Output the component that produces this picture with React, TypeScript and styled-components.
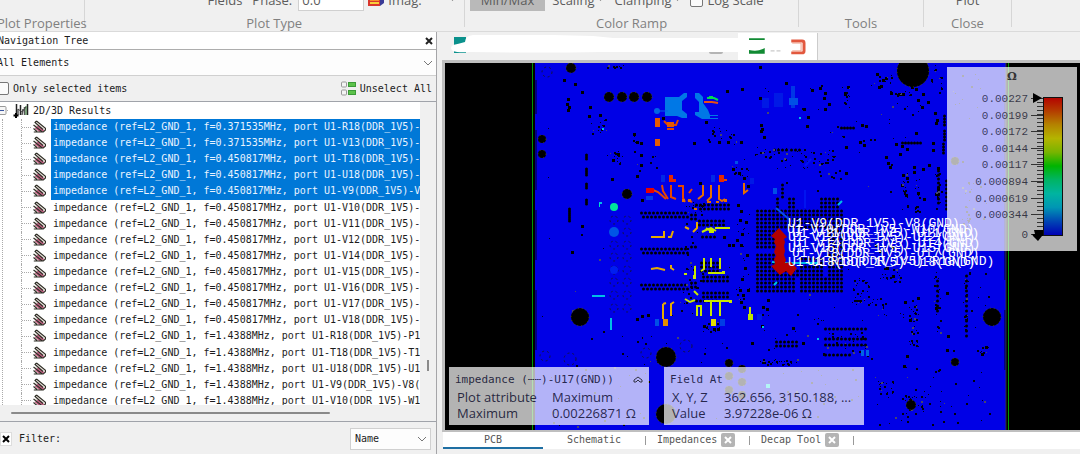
import React from 'react';
import styled, { createGlobalStyle } from 'styled-components';

const mono = '"DejaVu Sans Mono", "Liberation Mono", monospace';
const sans = '"Open Sans", "Noto Sans", sans-serif';

const GlobalStyle = createGlobalStyle`
  * { box-sizing: border-box; }
  body { margin: 0; background: #f0f0f0; overflow: hidden; }
  button, input, select { font: inherit; color: inherit; margin: 0; }
`;

const Shell = styled.div`
  display: flex;
  flex-direction: column;
  height: 100vh;
  overflow: hidden;
  background: #f0f0f0;
  color: #1c1c1c;
  font: 10px/16px ${mono};
`;

/* ---------- Ribbon ---------- */

const Ribbon = styled.header`
  display: flex;
  flex: none;
  height: 32px;
  border-bottom: 1px solid #dadada;
  font: 13px/16px ${sans};
  color: #5c5c5c;
`;

const Group = styled.section<{ $grow: number; $last?: boolean }>`
  display: flex;
  flex: ${(p) => p.$grow} 1 0;
  flex-direction: column;
  align-items: center;
  min-width: 0;
  height: 27px;
  border-right: ${(p) => (p.$last ? '0' : '1px solid #d6d6d6')};
  white-space: nowrap;
`;

const Controls = styled.div<{ $pad?: number; $center?: boolean }>`
  display: flex;
  flex: none;
  align-items: center;
  align-self: stretch;
  justify-content: ${(p) => (p.$center ? 'center' : 'flex-start')};
  height: 22px;
  margin-top: -11px;
  padding-left: ${(p) => p.$pad ?? 0}px;
`;

const GroupTitle = styled.div`
  flex: none;
  margin-top: 4px;
  color: #808080;
`;

const RibbonButton = styled.button<{ $active?: boolean; $gap?: number }>`
  display: flex;
  align-items: center;
  gap: 4px;
  height: 22px;
  margin-left: ${(p) => p.$gap ?? 0}px;
  padding: ${(p) => (p.$active ? '0 11px' : '0')};
  border: 0;
  background: ${(p) => (p.$active ? '#b9b9b9' : 'transparent')};
`;

const PhaseLabel = styled.label`
  display: flex;
  align-items: center;
  gap: 6px;
  margin-left: 10px;
`;

const PhaseInput = styled.input`
  width: 66px;
  height: 22px;
  padding: 0 3px;
  border: 1px solid #d0d0d0;
  background: #fff;
`;

const ScaleLabel = styled.label`
  display: flex;
  align-items: center;
  gap: 4px;
  margin-left: 10px;
`;

const Box = styled.input`
  appearance: none;
  width: 13px;
  height: 13px;
  border: 1px solid #777;
  border-radius: 2px;
  background: #fbfbfb;
`;

/* ---------- Body ---------- */

const Body = styled.main`
  display: flex;
  flex: 1;
  min-height: 0;
`;

const Sidebar = styled.aside`
  display: flex;
  flex: 0 0 441px;
  flex-direction: column;
  margin-left: -4px;
  border-right: 1px solid #a5a5a8;
`;

const PanelTitle = styled.div`
  display: flex;
  align-items: center;
  justify-content: space-between;
  height: 18px;
  padding: 0 0 0 2px;
  border-bottom: 1px solid #adadad;
  background: #fff;
`;

const IconButton = styled.button`
  display: grid;
  place-items: center;
  width: 14px;
  height: 14px;
  padding: 0;
  border: 0;
  background: transparent;
`;

const SelectWrap = styled.div<{ $small?: boolean }>`
  display: grid;
  align-items: center;
  width: ${(p) => (p.$small ? '81px' : 'auto')};
  height: ${(p) => (p.$small ? '22px' : '26px')};
  border: solid #d0d0d0;
  border-width: ${(p) => (p.$small ? '1px' : '0 0 1px')};
  background: #fdfdfd;

  > * { grid-area: 1 / 1; }
  > svg { justify-self: end; margin-right: 3px; pointer-events: none; }
`;

const Select = styled.select<{ $pad: number }>`
  appearance: none;
  width: 100%;
  height: 100%;
  padding: 0 16px 0 ${(p) => p.$pad}px;
  border: 0;
  background: transparent;
`;

const Options = styled.div`
  display: flex;
  align-items: center;
  justify-content: space-between;
  height: 25px;
  padding-right: 4px;
`;

const CheckLabel = styled.label`
  display: flex;
  align-items: center;
  gap: 4px;
`;

const TextButton = styled.button`
  display: flex;
  align-items: center;
  gap: 4px;
  padding: 0;
  border: 0;
  background: transparent;
`;

const TreeFrame = styled.div`
  display: grid;
  flex: 1;
  grid-template: minmax(0, 1fr) 16px / minmax(0, 1fr) 16px;
  min-height: 0;
  border: solid #a0a3aa;
  border-width: 1px 0;
`;

const Tree = styled.div`
  overflow: hidden;
  padding-left: 4px;
  background: #fff;
`;

const TreeRoot = styled.div`
  display: flex;
  align-items: center;
  gap: 4px;
  height: 17px;
`;

const TreeRows = styled.ul`
  display: grid;
  grid-auto-rows: 1fr;
  height: 290px;
  margin: 0 0 0 2px;
  padding: 0;
  border-left: 1px dotted #aaa;
  list-style: none;
`;

const TreeRow = styled.li`
  display: flex;
  align-items: center;
  padding-left: 18px;
  white-space: pre;
`;

const Branch = styled.span`
  align-self: stretch;
  display: flex;
  align-items: center;
  width: 12px;
  border-left: 1px dotted #aaa;

  &::after {
    content: '';
    flex: 1;
    border-top: 1px dotted #aaa;
    margin-right: 2px;
  }
`;

const RowText = styled.span<{ $selected: boolean }>`
  display: flex;
  flex: 1;
  align-items: center;
  align-self: stretch;
  min-width: 0;
  margin-left: 5px;
  padding-left: 2px;
  overflow: hidden;
  background: ${(p) => (p.$selected ? '#0078d7' : 'transparent')};
  color: ${(p) => (p.$selected ? '#e8f3ff' : '#1c1c1c')};
`;

const VScroll = styled.div`
  display: flex;
  justify-content: center;
  align-items: flex-end;
  padding-bottom: 34px;
  &::after { content: ''; width: 2px; height: 11px; background: #8a8a8a; }
`;

const HScroll = styled.div`
  display: flex;
  align-items: center;
  padding-left: 15px;
  &::after { content: ''; width: 319px; height: 2px; border-radius: 1px; background: #8a8a8a; }
`;

const FilterRow = styled.div`
  display: flex;
  align-items: center;
  gap: 7px;
  height: 32px;
  padding: 2px 5px 0 4px;

  > :last-child { margin-left: auto; }
`;

const ClearButton = styled(IconButton)`
  width: 12px;
  border: 1px solid #ddd;
  background: #fff;
`;

/* ---------- Work area ---------- */

const Work = styled.section`
  display: flex;
  flex: 1;
  flex-direction: column;
  min-width: 0;
  margin-left: 5px;
`;

const DocTabs = styled.div`
  display: flex;
  height: 28px;
  padding: 1px 0 0 9px;
`;

const DocTab = styled.button<{ $active?: boolean }>`
  display: flex;
  align-items: center;
  width: ${(p) => (p.$active ? '80px' : '287px')};
  height: 27px;
  padding: ${(p) => (p.$active ? '0 11px 2px' : '0 0 2px')};
  border: 0;
  border-right: ${(p) => (p.$active ? '1px solid #ccc' : '0')};
  background: ${(p) => (p.$active ? '#fff' : 'transparent')};
`;

const Viewport = styled.div`
  position: relative;
  flex: 1;
  min-height: 0;
  border: solid #bfbfbf;
  border-width: 3px 0 2px 3px;
  background: #000;

  > svg { display: block; width: 100%; height: 100%; }
`;

const Legend = styled.div`
  position: absolute;
  top: 4px;
  right: 3px;
  width: 130px;
  height: 184px;
  background: rgba(255, 255, 255, 0.7);
`;

const Cards = styled.div`
  position: absolute;
  bottom: 5px;
  left: 4px;
  display: flex;
  gap: 15px;
`;

const Card = styled.section`
  width: 200px;
  height: 58px;
  padding: 5px 6px 0;
  background: rgba(255, 255, 255, 0.7);
  color: rgba(0, 0, 30, 0.8);
  font: 13px/16px ${sans};
`;

const CardTitle = styled.h2`
  display: flex;
  align-items: center;
  justify-content: space-between;
  height: 16px;
  margin: 0 0 1px;
  font: 11px/16px ${mono};
`;

const Fields = styled.dl<{ $col: number }>`
  display: grid;
  grid-template-columns: ${(p) => p.$col}px 1fr;
  margin: 0;
  padding-left: 2px;
  white-space: nowrap;

  dd { margin: 0; }
`;

const ViewTabs = styled.nav`
  display: flex;
  align-items: stretch;
  height: 17px;
  margin: 0 0 5px 1px;
  background: #fff;
  color: #555;
`;

const ViewTab = styled.button<{ $active?: boolean; $width: number }>`
  width: ${(p) => p.$width}px;
  padding: 0;
  border: 0;
  border-bottom: 2px solid ${(p) => (p.$active ? '#1f6fa3' : 'transparent')};
  background: transparent;
  white-space: nowrap;
`;

const CloseTab = styled.button`
  display: grid;
  place-items: center;
  align-self: center;
  width: 14px;
  height: 14px;
  margin: 0 3px 2px 4px;
  padding: 0;
  border: 0;
  border-radius: 2px;
  background: #b4b4b4;
`;

const Divider = styled.span`
  align-self: center;
  width: 1px;
  height: 9px;
  margin: 0 11px;
  background: #999;

  button:nth-child(2) + & { margin-left: 0; }
`;

/* ---------- Icons ---------- */

const Chevron = () => (
  <svg width="10" height="6" viewBox="0 0 10 6" fill="none" stroke="#777">
    <path d="M1 1l4 4 4-4" />
  </svg>
);

const Cross = ({ size = 8, color = '#222' }: { size?: number; color?: string }) => (
  <svg width={size} height={size} viewBox="0 0 8 8" stroke={color} strokeWidth="2">
    <path d="M1 1l6 6M7 1L1 7" />
  </svg>
);

const Caret = () => (
  <svg width="5" height="4" viewBox="0 0 5 4"><path d="M0 0h5L2.500 3z" fill="#777" /></svg>
);

const FieldIcon = () => (
  <svg width="13" height="14" viewBox="0 0 13 14">
    <path d="M2 2l2-1 8.500 7v2L10.500 12H1l3.500-1.500L.5 8l3-.5L.5 5 3 4.500z" fill="#e9e2dc" />
    <path d="M4.500 6l6 5M2.500 7.500l5 4" stroke="#c4587f" strokeWidth="2" />
    <path d="M3.500 1l9 7.200V10l-2.200 2H.8M3.500 1L2 2.500l8 7M.5 5l9 7M.5 8.500l3.500 3" fill="none" stroke="#2c2c24" strokeWidth="1.100" />
  </svg>
);

const ResultsIcon = () => (
  <svg width="16" height="16" viewBox="0 0 16 16">
    <path d="M3.500 1v9M7.500 2v10M14.500 1v11" stroke="#222" strokeWidth="1.500" />
    <path d="M5 12V6M9 12l1-6M11.500 12V4" stroke="#555" strokeWidth="1.500" />
    <path d="M13 12V3" stroke="#5b8f5b" strokeWidth="1.500" />
    <path d="M5 6l4 3 4-5" stroke="#444" fill="none" />
    <path d="M.5 12.500h5M3 10v5" stroke="#000" strokeWidth="2" />
  </svg>
);

const Expander = () => (
  <svg width="9" height="12" viewBox="0 0 9 12">
    <rect x="-3" y="1.500" width="9" height="8" rx="1" fill="#f6f6f6" stroke="#999" />
    <path d="M0 5.500h4" stroke="#3a56a0" />
    <path d="M7 5.500h2" stroke="#aaa" strokeDasharray="1 1" />
  </svg>
);

const UnselectIcon = () => (
  <svg width="15" height="15" viewBox="0 0 15 15">
    <rect x=".5" y="1" width="5" height="5" rx="1" fill="#f4f4f4" stroke="#999" />
    <rect x=".5" y="9" width="5" height="5" rx="1" fill="#f4f4f4" stroke="#999" />
    <rect x="7.500" y="1.500" width="7" height="4" fill="#5cc24a" stroke="#3c9a38" />
    <rect x="7.500" y="9.500" width="7" height="4" fill="#5cc24a" stroke="#3c9a38" />
  </svg>
);

const PlotIcon = () => (
  <svg width="16" height="14" viewBox="0 0 16 14">
    <path d="M4 0h12v10l-4 3H4z" fill="#3a3a96" />
    <path d="M0 4h12v9H0z" fill="#d9362c" />
    <path d="M2 6h9v2H2z" fill="#f58d2c" />
    <path d="M2 9h9v2H2z" fill="#f7cf3a" />
  </svg>
);

/* ---------- Board drawing ---------- */

type Pt = [number, number];

const pairs = (s: string): Pt[] => s.split(' ').map((v) => v.split(',').map(Number) as Pt);

const dots = pairs(
  '564,80 575,84 582,92 568,99 567,104 569,107 568,110 590,107 589,116 600,115 634,134 637,142 641,143 641,155 641,165 637,176 618,154 613,160 612,179 582,226 572,252 642,200 760,67 760,98 727,91 742,89 786,83 706,122 663,118 694,143 719,142 728,142 741,142 761,125 762,129 761,131 764,137 812,90 820,88 825,93 824,98 829,104 825,109 804,109 808,117 807,126 846,173 892,247 886,78 877,74 881,86 883,80 879,87 912,87 916,89 918,100 922,107 928,102 923,94 891,93 899,94 903,94 937,120 935,113 936,123 862,125 866,126 860,142 864,145 846,147 916,133 896,144 902,146 907,149 900,154 933,143 933,150 886,157 888,163 890,167 903,175 914,167 914,172 923,169 929,165 938,168 907,178 902,185 906,195 918,193 924,199 938,188 937,194 848,87 845,94 845,93 748,186 744,178 700,183 738,205 741,211 740,220 746,222 742,234 737,240 741,245 747,255 745,268 742,279 740,290 743,295 748,290 741,302 744,307 733,169 739,173 763,307 768,300 767,309 762,326 793,328 637,319 642,316 648,315 704,326 714,329 718,329 724,237 729,245 733,245 876,245 880,251 887,268 893,276 910,320 905,302 918,298 936,308 947,293 948,336 947,350 982,354 986,347 907,356 904,366 752,343 803,343'
);

const discs: [number, number, number][] = [
  [571, 68, 5], [609, 97, 5], [622, 97, 5], [634, 97, 5], [647, 97, 5], [542, 139, 4], [542, 154, 4],
  [627, 194, 5], [913, 71, 16], [580, 317, 9], [666, 357, 10], [666, 414, 10], [992, 317, 9], [955, 362, 4],
  [729, 363, 4], [742, 369, 4], [729, 376, 4], [742, 382, 4], [729, 390, 4], [742, 395, 4], [955, 161, 4], [911, 405, 5],
];

// x, y, width, height and pitch of each regular via pattern
const grids: number[][] = [
  [640, 212, 46, 1, 4], [642, 216, 46, 1, 4], [640, 248, 46, 1, 4], [642, 252, 46, 1, 4],
  [640, 284, 46, 1, 4], [642, 288, 46, 1, 4], [695, 204, 34, 1, 4], [699, 208, 28, 1, 4],
  [690, 214, 6, 5, 4], [698, 220, 24, 5, 4], [701, 236, 14, 1, 4], [690, 246, 6, 1, 4],
  [700, 262, 16, 9, 4], [702, 276, 26, 5, 4], [690, 282, 6, 5, 4], [702, 292, 26, 5, 4], [695, 300, 22, 1, 4],
  [756, 210, 86, 4, 4], [756, 218, 20, 28, 4], [756, 254, 20, 20, 4], [756, 278, 36, 12, 4],
  [800, 278, 40, 12, 4], [828, 258, 12, 16, 4], [820, 198, 16, 8, 4], [776, 198, 1, 8, 4], [788, 198, 5, 8, 4],
  [780, 218, 60, 8, 4], [828, 230, 12, 24, 4], [780, 270, 40, 4, 4], [800, 258, 20, 8, 4],
  [824, 328, 42, 1, 4], [824, 338, 42, 1, 4], [824, 344, 42, 1, 4], [824, 354, 26, 1, 4],
  [775, 341, 22, 4, 4], [901, 142, 20, 1, 3], [840, 127, 12, 1, 3],
  [943, 115, 1, 10, 3], [943, 130, 1, 10, 3], [942, 143, 1, 10, 3], [937, 170, 1, 34, 4], [945, 180, 1, 28, 4],
  [585, 154, 1, 5, 2], [585, 168, 1, 6, 2], [585, 183, 1, 5, 2], [585, 199, 1, 5, 2], [568, 208, 1, 13, 2],
  [781, 184, 1, 14, 4], [936, 280, 1, 34, 5], [965, 275, 1, 60, 5], [773, 149, 12, 1, 4], [790, 149, 9, 1, 4],
];

// x, y, width, height and count of each region with irregular small marks
const clusters: number[][] = [
  [590, 118, 18, 16, 14], [606, 150, 16, 14, 12], [606, 65, 24, 2, 10], [705, 126, 40, 18, 20],
  [630, 130, 28, 40, 10], [754, 146, 20, 12, 16], [776, 148, 32, 20, 22], [800, 148, 36, 16, 22],
  [870, 74, 22, 12, 14], [888, 90, 26, 5, 12], [930, 64, 12, 30, 14], [840, 85, 10, 30, 12],
  [824, 125, 20, 12, 5], [816, 170, 26, 8, 8], [902, 170, 6, 40, 18], [914, 178, 5, 34, 16], [935, 170, 6, 42, 16],
  [852, 278, 18, 26, 34], [872, 298, 14, 18, 16], [880, 268, 20, 14, 18], [908, 304, 10, 42, 34],
  [900, 300, 18, 18, 8], [934, 270, 6, 70, 18], [963, 270, 6, 60, 20], [976, 344, 12, 12, 8],
  [730, 164, 26, 14, 10], [736, 210, 14, 94, 20], [684, 200, 20, 14, 14], [684, 222, 18, 60, 18],
  [680, 284, 18, 30, 14], [696, 322, 24, 10, 12], [822, 328, 46, 28, 30], [760, 358, 40, 6, 24],
  [765, 64, 70, 50, 8], [850, 104, 80, 60, 16], [540, 230, 70, 160, 8], [640, 335, 150, 28, 14],
  [610, 330, 60, 35, 8], [750, 310, 60, 30, 8], [850, 366, 140, 60, 50], [900, 395, 24, 22, 24],
  [870, 380, 24, 14, 16], [780, 370, 60, 50, 24], [970, 180, 20, 150, 12], [550, 366, 100, 60, 24],
  [950, 70, 30, 50, 12], [962, 180, 8, 54, 22], [540, 64, 460, 360, 30], [805, 294, 40, 30, 8],
];

const scatter = (): [number, number, number][] => {
  let seed = 29;
  const next = () => {
    seed = (seed * 1103515245 + 12345) % 2147483648;
    return seed / 2147483648;
  };
  return clusters.flatMap(([x, y, w, h, n]) =>
    Array.from({ length: n }, (): [number, number, number] => [
      Math.round(x + next() * w), Math.round(y + next() * h), next() > 0.55 ? 2 : 1,
    ])
  );
};

const gridPath = grids
  .map(([x, y, w, h, s]) => {
    let d = '';
    for (let j = 0; j <= h; j += s) for (let i = 0; i <= w; i += s) d += `M${x + i} ${y + j + 1}a1.500 1.500 0 0 1 3 0a1.500 1.500 0 0 1-3 0z`;
    return d;
  })
  .join('');

const traces: [string, string][] = [
  ['#e64600', 'M653 190l5 2 8 7M662 185l1 6 5 8M671 185v12l5 2M678 186h6M683 186v12l2 4M692 189l-3 4M688 200l4 2M664 121l4 4h8l2-5M667 129h7'],
  ['#e66e00', 'M703 185v10l-5 4M711 185v12l-4 4M719 185v14l3 2 3-2M744 183v10l4-3M707 202h4M694 209h3M716 202h3'],
  ['#e6aa00', 'M651 237h13v-6M673 231l-2 6h-3M651 269l6-1 8 2M671 265v3l3 2M663 304v15M663 304l3-1M671 316v-12l3-2M685 227l4 2M697 222v6l-4 4'],
  ['#c8e600', 'M702 232l4-2 5-2 5 3M715 228h15M704 258v11l-3 2M711 258v9M720 258v11M695 266v10M708 273h15M697 316v-10h4v10M711 316v-14M720 316v-14M704 301h27M685 299l5 3 5-2M684 274h3M694 291l4 4M750 307v8M706 228l6 4'],
  ['#00dc50', 'M707 98h7l4 2M709 97h4'],
  ['#e65014', 'M704 102h8l6 1'],
  ['#00bee6', 'M838 205l4-4M774 285l3-3M782 263h36M592 296h13M611 318v12M603 128v2M800 117v2M772 262l20 2M818 338v2M599 203h3M762 327h2'],
  ['#0a50e6', 'M776 208l14 12'],
  ['#0014f0', 'M805 166l6-7M805 190v18'],
];

const blocks: [string, number, number, number, number][] = [
  ['#e65a00', 655, 118, 5, 9], ['#e65a00', 667, 122, 7, 5], ['#e65a00', 655, 139, 5, 7],
  ['#e62800', 669, 175, 4, 7], ['#e62800', 673, 179, 3, 3], ['#e62800', 719, 175, 5, 7], ['#e64600', 724, 179, 3, 2],
  ['#e60000', 646, 188, 8, 5], ['#003ce6', 646, 196, 7, 4], ['#0028e6', 661, 175, 4, 7], ['#0028e6', 711, 175, 4, 7],
  ['#0050e6', 655, 319, 4, 7], ['#e68c00', 663, 319, 5, 7], ['#e6dc00', 711, 319, 5, 7], ['#003ce6', 720, 319, 5, 7],
  ['#bee600', 748, 314, 5, 6], ['#0019e6', 757, 314, 5, 6], ['#0050e6', 773, 188, 4, 6], ['#0019e6', 750, 178, 4, 6],
  ['#0019e6', 762, 98, 7, 10], ['#0019e6', 774, 93, 9, 14], ['#0037e6', 791, 86, 4, 22], ['#0050e6', 789, 98, 9, 7],
  ['#0050e6', 735, 161, 3, 3], ['#0064e6', 861, 350, 3, 6], ['#0064e6', 866, 350, 3, 6], ['#00dcc8', 599, 203, 1, 4],
  ['#c8e600', 709, 229, 5, 4], ['#00dcdc', 766, 384, 4, 4], ['#e66e00', 688, 199, 3, 3], ['#e66e00', 724, 199, 3, 3],
  ['#e66e00', 682, 199, 3, 3], ['#c8e600', 693, 275, 3, 4], ['#c8e600', 722, 271, 3, 3], ['#c8e600', 729, 300, 3, 3],
];

const portLabels: [number, number, string][] = [
  [788, 227, 'U1-V9(DDR_1V5)-V8(GND)'],
  [787, 233, 'U1-V10(DDR_1V5)-W10(GND)'],
  [792, 237, 'U1-V11(DDR_1V5)-U11(GND)'],
  [788, 241, 'U1-V12(DDR_1V5)-U12(GND)'],
  [793, 247, 'U1-V14(DDR_1V5)-U14(GND)'],
  [788, 252, 'U1-V16(DDR_1V5)-U15(GND)'],
  [792, 257, 'U1-V18(DDR_1V5)-U17(GND)'],
  [788, 266, 'U1-U18(DDR_1V5)-U18(GND)'],
  [807, 265, 'U1-R18(DDR_1V5)-R18(GND)'],
];

const Board = () => (
  <svg viewBox="445 63 635 367" preserveAspectRatio="xMinYMin slice" role="img" aria-label="PCB impedance plot">
    <rect x="535" y="63" width="471" height="367" fill="#0000e6" />
    <path d="M536 80v34M536 130v60M536 210v50M536 290v60M1005 100v60M1005 200v80M1005 310v60" stroke="#00001e" strokeWidth="1" />
    <path d="M532 63v367M1008 63v367" stroke="#009600" strokeWidth="1" shapeRendering="crispEdges" />
    <path d="M1006 63v367" stroke="#323232" />
    <g fill="none" stroke="#14143c" strokeDasharray="2 3">
      {[220, 232, 245, 257, 270, 282, 295, 308].map((y) => (
        <g key={y}><circle cx="614" cy={y} r="4" /><circle cx="627" cy={y} r="4" /></g>
      ))}
      <circle cx="547" cy="72" r="5" /><circle cx="545" cy="356" r="5" /><circle cx="570" cy="359" r="6" />
      <circle cx="646" cy="353" r="5" /><circle cx="686" cy="346" r="6" />
    </g>
    <path d="M665 97h14l5-4h3v4l-5 4v9l5 4v4h-5l-5-2h-12zM695 93h4l4 4v6l5 7 2 5h8v1h-8v2h8v1h-16l-7-4v-3h4V102l-4-4z" fill="#0078e6" />
    <path d="M656 111h12" stroke="#0064e6" /><circle cx="657" cy="111" r="3" fill="#0064e6" />
    <path d={gridPath} />
    <g fill="#000" shapeRendering="crispEdges">
      {dots.map(([x, y], i) => <rect key={i} x={x - 1} y={y - 1} width="3" height="3" />)}
      {scatter().map(([x, y, s], i) => <rect key={i} x={x} y={y} width={s} height={s} fill={i % 9 ? '#00000f' : '#46466e'} />)}
    </g>
    {discs.map(([x, y, r], i) => (
      <g key={i}><circle cx={x} cy={y} r={r} /><circle cx={x} cy={y} r={r} fill="none" stroke="#50500a" strokeDasharray="1 3" /></g>
    ))}
    <circle cx="614" cy="207" r="4" fill="#00e69b" /><circle cx="614" cy="232" r="5" fill="#0055e6" />
    <circle cx="614" cy="270" r="4" fill="#001ef0" />
    <g fill="none" strokeWidth="2">
      {traces.map(([c, d]) => <path key={c} d={d} stroke={c} />)}
    </g>
    <g shapeRendering="crispEdges">
      {blocks.map(([c, x, y, w, h], i) => <rect key={i} x={x} y={y} width={w} height={h} fill={c} />)}
    </g>
    <path d="M779 228l8 9-3 2 1 3-1 4 1 5-1 4 2 5-1 3 6-1 6 6-6 8-5-5-6 4-9-9 4-2-1-5 2-3-2-4 2-6-2-4 1-3-4-3z" fill="#b40000" />
    <g fill="#fff" fontFamily='"Liberation Mono", monospace' fontSize="13">
      {portLabels.map(([x, y, t]) => <text key={t} x={x} y={y}>{t}</text>)}
    </g>
  </svg>
);

const scale: [string, number][] = [
  ['0.00227', 31], ['0.00199', 48], ['0.00172', 64], ['0.00144', 81], ['0.00117', 97],
  ['0.000894', 114], ['0.000619', 131], ['0.000344', 147], ['0', 167],
];

const ramp = ['#b40000', '#b43c00', '#b48200', '#b4b400', '#78b400', '#00b400', '#00b464', '#00b4a0', '#0096b4', '#0046b4', '#0000b4'];

const ColorLegend = () => (
  <Legend>
    <svg width="130" height="184" viewBox="0 0 130 184">
      <defs>
        <linearGradient id="ramp" x1="0" y1="0" x2="0" y2="1">
          {ramp.map((c, i) => <stop key={c} offset={`${i * 10}%`} stopColor={c} />)}
        </linearGradient>
      </defs>
      <text x="65" y="13" textAnchor="middle" fontFamily='"DejaVu Serif", serif' fontWeight="bold" fontSize="11" fill="#333">Ω</text>
      <g fontFamily='"Liberation Mono", monospace' fontSize="11" fill="rgba(0,0,20,.7)" textAnchor="end">
        {scale.map(([t, y]) => <text key={t} x="81" y={y + 4}>{t}</text>)}
      </g>
      <g stroke="#333" shapeRendering="crispEdges">
        {scale.map(([t, y]) => <path key={t} d={`M84 ${y}h12`} />)}
        {Array.from({ length: 33 }, (_, i) => <path key={i} d={`M90 ${31 + i * 4}h6`} />)}
        <rect x="96" y="30" width="19" height="138" fill="url(#ramp)" stroke="#111" />
      </g>
      <path d="M86 26v10l9-5z" />
      <path d="M85 167h3l-1-4h9v6h-1l-4 5-5-5z" />
    </svg>
  </Legend>
);

/* ---------- Tree data ---------- */

const results: [string, string, string][] = [
  ['0.371535', 'R18', '-'], ['0.371535', 'V13', '-'], ['0.450817', 'T18', '-'], ['0.450817', 'U18', '-'],
  ['0.450817', 'V9', '-V'], ['0.450817', 'V10', '-'], ['0.450817', 'V11', '-'], ['0.450817', 'V12', '-'],
  ['0.450817', 'V14', '-'], ['0.450817', 'V15', '-'], ['0.450817', 'V16', '-'], ['0.450817', 'V17', '-'],
  ['0.450817', 'V18', '-'], ['1.4388', 'R18', '-P1'], ['1.4388', 'T18', '-T1'], ['1.4388', 'U18', '-U1'],
  ['1.4388', 'V9', '-V8('], ['1.4388', 'V10', '-W1'],
];

export default function App() {
  return (
    <Shell>
      <GlobalStyle />
      <Ribbon>
        <Group $grow={84}>
          <Controls />
          <GroupTitle>Plot Properties</GroupTitle>
        </Group>
        <Group $grow={381}>
          <Controls $pad={123}>
            <RibbonButton>Fields</RibbonButton>
            <PhaseLabel>Phase:<PhaseInput defaultValue="0.0" /></PhaseLabel>
            <RibbonButton $gap={4}><PlotIcon />Imag.</RibbonButton>
            <RibbonButton $gap={28} aria-label="More components"><Caret /></RibbonButton>
          </Controls>
          <GroupTitle>Plot Type</GroupTitle>
        </Group>
        <Group $grow={335}>
          <Controls $pad={5}>
            <RibbonButton $active>Min/Max</RibbonButton>
            <RibbonButton $gap={7}>Scaling<Caret /></RibbonButton>
            <RibbonButton $gap={11}>Clamping<Caret /></RibbonButton>
            <ScaleLabel><Box type="checkbox" />Log Scale</ScaleLabel>
          </Controls>
          <GroupTitle>Color Ramp</GroupTitle>
        </Group>
        <Group $grow={124}>
          <Controls />
          <GroupTitle>Tools</GroupTitle>
        </Group>
        <Group $grow={88}>
          <Controls $center><RibbonButton>Plot</RibbonButton></Controls>
          <GroupTitle>Close</GroupTitle>
        </Group>
        <Group $grow={68} $last />
      </Ribbon>

      <Body>
        <Sidebar>
          <PanelTitle>
            Navigation Tree
            <IconButton aria-label="Close panel"><Cross /></IconButton>
          </PanelTitle>
          <SelectWrap>
            <Select $pad={1} aria-label="Elements"><option>All Elements</option></Select>
            <Chevron />
          </SelectWrap>
          <Options>
            <CheckLabel><Box type="checkbox" />Only selected items</CheckLabel>
            <TextButton><UnselectIcon />Unselect All</TextButton>
          </Options>
          <TreeFrame>
            <Tree>
              <TreeRoot><Expander /><ResultsIcon /><span>2D/3D Results</span></TreeRoot>
              <TreeRows>
                {results.map(([freq, pin, to], i) => (
                  <TreeRow key={i}>
                    <Branch />
                    <FieldIcon />
                    <RowText $selected={i < 5}>
                      {`impedance (ref=L2_GND_1, f=${freq}MHz, port U1-${pin}(DDR_1V5)${to}`}
                    </RowText>
                  </TreeRow>
                ))}
              </TreeRows>
            </Tree>
            <VScroll />
            <HScroll />
          </TreeFrame>
          <FilterRow>
            <ClearButton aria-label="Clear filter"><Cross color="#000" /></ClearButton>
            <span>Filter:</span>
            <SelectWrap $small>
              <Select $pad={4} aria-label="Filter by"><option>Name</option></Select>
              <Chevron />
            </SelectWrap>
          </FilterRow>
        </Sidebar>

        <Work>
          <DocTabs>
            <DocTab aria-label="Project">
              <svg width="287" height="22" viewBox="451 35 287 22">
                <path d="M454 37h12v16h-12z" fill="#0a918c" />
                <path d="M709 48h14v4q0 2-2 2h-10q-2 0-2-2z" fill="#b4b4b4" />
                <path d="M453 45q5-1 12-3 0-6 8-7 60-1 120 1l20 2h125v14H600q-60 1-130 0-12 1-17-1-4-3 0-6z" fill="#fff" />
              </svg>
            </DocTab>
            <DocTab $active aria-label="Board">
              <svg width="58" height="18" viewBox="0 0 58 18">
                <path d="M0 1h16v2H0zM0 13q8 2 14-1l2-1v6H0z" fill="#118a33" />
                <path d="M22 14h4M28 14h4" stroke="#bbb" strokeWidth="1" />
                <path d="M43 4h11q2 0 2 2v8q0 2-2 2H43" fill="none" stroke="#e2583e" strokeWidth="3" />
                <path d="M44 6h9v8h-9" fill="none" stroke="#f0a08a" strokeWidth="1" />
              </svg>
            </DocTab>
          </DocTabs>
          <Viewport>
            <Board />
            <ColorLegend />
            <Cards>
              <Card>
                <CardTitle>
                  impedance (┄┄)-U17(GND))
                  <svg width="10" height="8" viewBox="0 0 10 8" fill="none" stroke="#334">
                    <path d="M1 4l4-3 4 3v2H7L5 4 3 6H1z" />
                  </svg>
                </CardTitle>
                <Fields $col={95}>
                  <dt>Plot attribute</dt><dd>Maximum</dd>
                  <dt>Maximum</dt><dd>0.00226871 Ω</dd>
                </Fields>
              </Card>
              <Card>
                <CardTitle>Field At</CardTitle>
                <Fields $col={52}>
                  <dt>X, Y, Z</dt><dd>362.656, 3150.188, ...</dd>
                  <dt>Value</dt><dd>3.97228e-06 Ω</dd>
                </Fields>
              </Card>
            </Cards>
          </Viewport>
          <ViewTabs>
            <ViewTab $active $width={100}>PCB</ViewTab>
            <ViewTab $width={102}>Schematic</ViewTab>
            <Divider />
            <ViewTab $width={60}>Impedances</ViewTab>
            <CloseTab aria-label="Close Impedances"><Cross color="#fff" /></CloseTab>
            <Divider />
            <ViewTab $width={60}>Decap Tool</ViewTab>
            <CloseTab aria-label="Close Decap Tool"><Cross color="#fff" /></CloseTab>
            <Divider />
          </ViewTabs>
        </Work>
      </Body>
    </Shell>
  );
}
